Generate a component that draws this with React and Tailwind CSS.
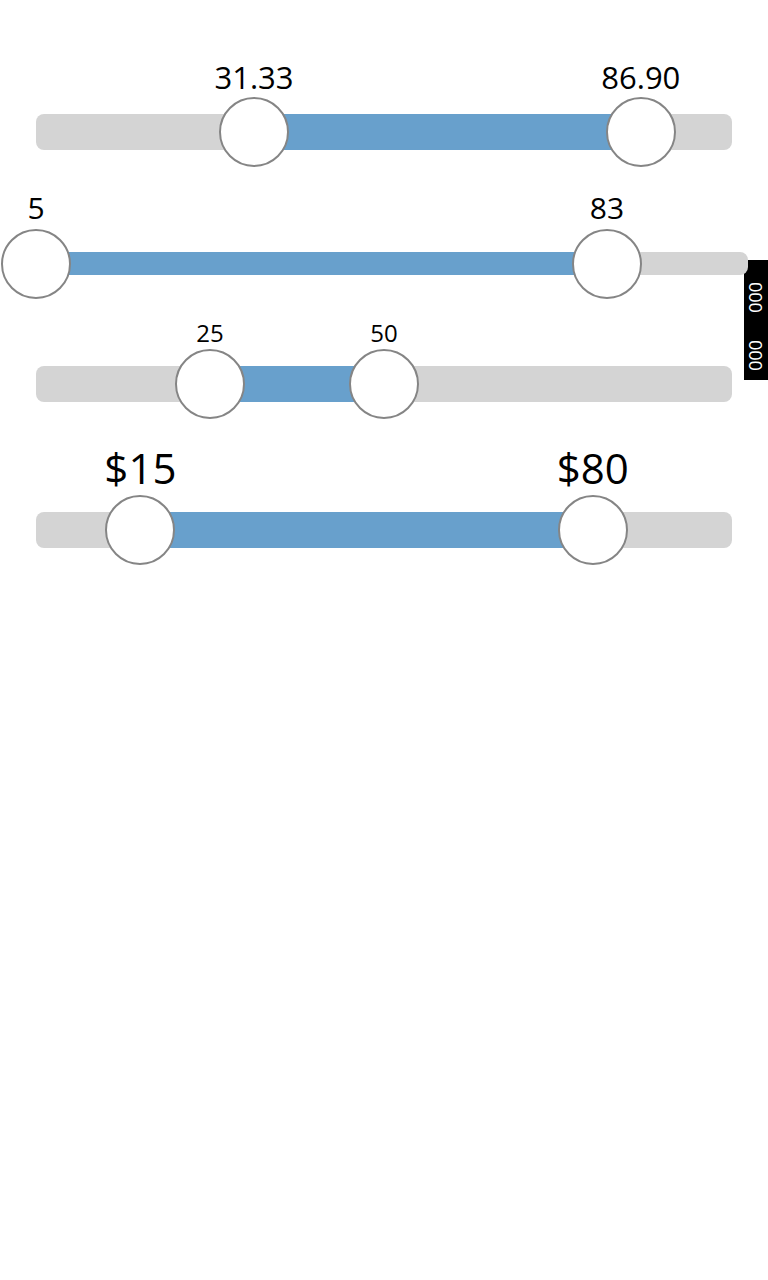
import React from 'react';

const sliders = [
    {
        id: 'decimal',
        values: ['31.33', '86.90'],
        pos: [0.3133, 0.869],
        track: 'h-9 mx-9 mt-[114px]',
        label: 'text-[31px] mb-[6px]'
    },
    {
        id: 'thin',
        values: ['5', '83'],
        pos: [0, 0.802],
        track: 'h-[23px] ml-9 mr-5 mt-[102px]',
        label: 'text-[30px] mb-[8px]'
    },
    {
        id: 'small',
        values: ['25', '50'],
        pos: [0.25, 0.5],
        track: 'h-9 mx-9 mt-[91px]',
        label: 'text-[24px] mb-[6px]'
    },
    {
        id: 'price',
        values: ['$15', '$80'],
        pos: [0.15, 0.8],
        track: 'h-9 mx-9 mt-[110px]',
        label: 'text-[42px] mb-[8px]'
    }
];

const Thumb = ({ left, value, labelClass }) => (
    <div
        className="absolute top-1/2 w-[70px] h-[70px] -translate-x-1/2 -translate-y-1/2 rounded-full bg-white border-2 border-[#858585]"
        style={{ left: `${left * 100}%` }}
    >
        <span className={`absolute bottom-full left-1/2 -translate-x-1/2 leading-none whitespace-nowrap text-black ${labelClass}`}>
            {value}
        </span>
    </div>
);

const RangeSlider = ({ slider }) => {
    const [from, to] = slider.pos;
    return (
        <div className={`relative rounded-lg bg-[#d4d4d4] ${slider.track}`}>
            <div
                className="absolute inset-y-0 bg-[#68a0cc]"
                style={{ left: `${from * 100}%`, width: `${(to - from) * 100}%` }}
            />
            <Thumb left={from} value={slider.values[0]} labelClass={slider.label} />
            <Thumb left={to} value={slider.values[1]} labelClass={slider.label} />
        </div>
    );
};

const App = () => {
    return (
        <div className="relative min-h-[1280px] bg-white font-['Open_Sans','Noto_Sans',sans-serif]">
            {/* debug strip pinned to the right edge */}
            <div className="absolute right-0 top-[260px] w-6 h-[120px] bg-black flex flex-col items-center pt-[22px] gap-[27px]">
                <span className="[writing-mode:vertical-rl] text-white text-[18px] leading-none">000</span>
                <span className="[writing-mode:vertical-rl] text-white text-[18px] leading-none">000</span>
            </div>
            <div className="flex flex-col">
                {sliders.map(s => (
                    <RangeSlider key={s.id} slider={s} />
                ))}
            </div>
        </div>
    );
};

export default App;
